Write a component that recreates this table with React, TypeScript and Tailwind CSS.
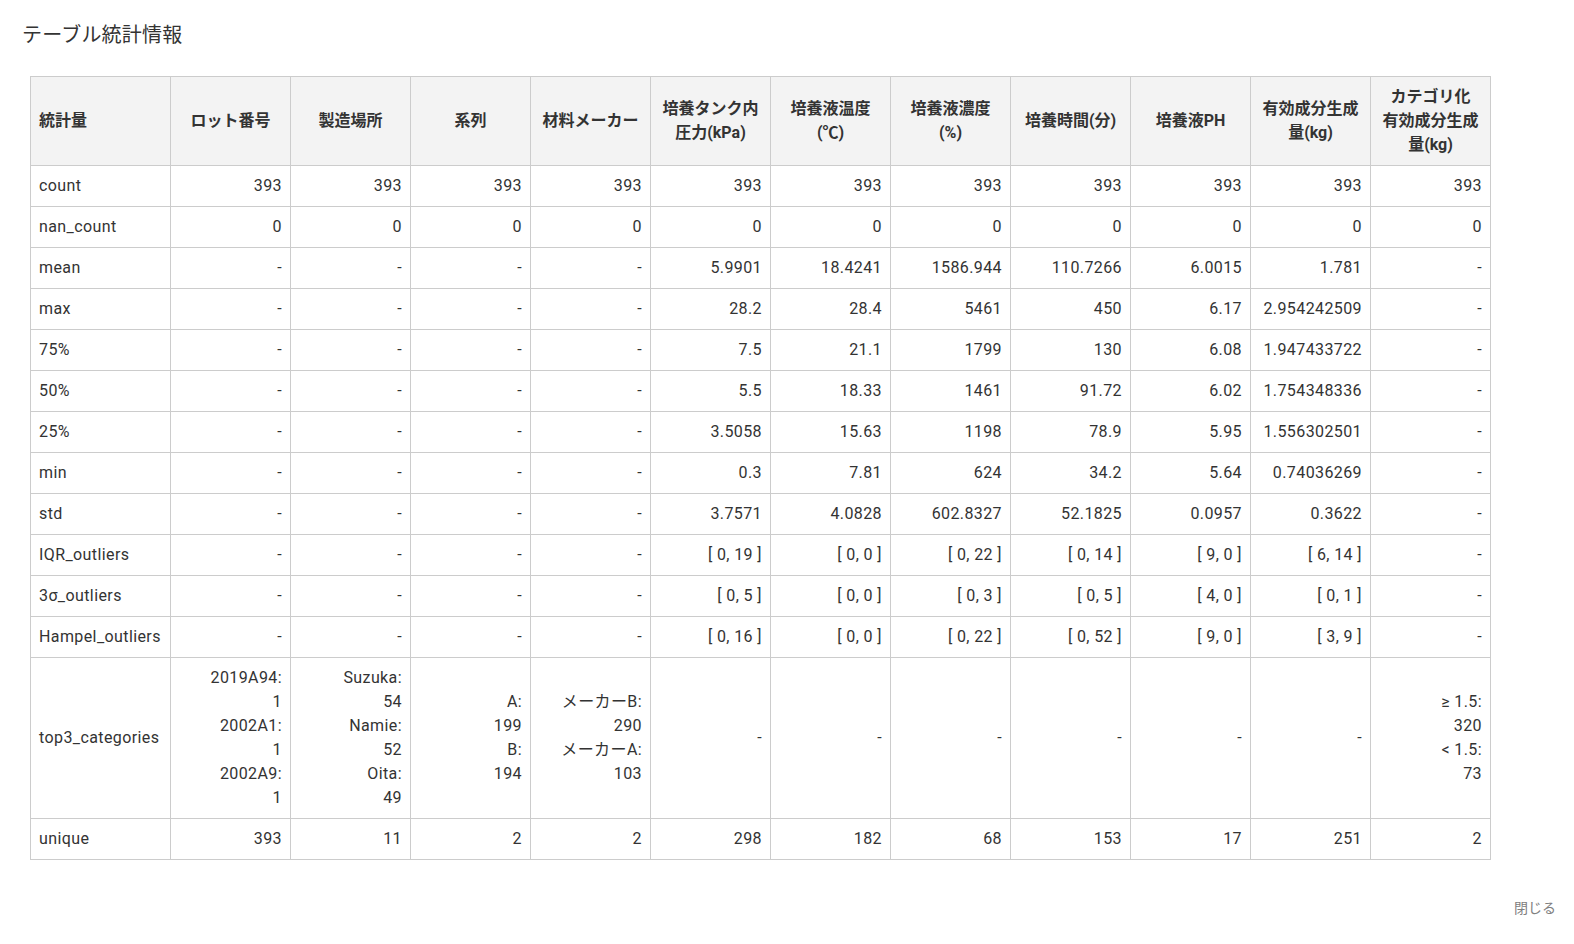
import React from "react";

type Row = {
  label: string;
  values: (string | string[])[];
};

const headers: string[][] = [
  ["ロット番号"],
  ["製造場所"],
  ["系列"],
  ["材料メーカー"],
  ["培養タンク内", "圧力(kPa)"],
  ["培養液温度", "(℃)"],
  ["培養液濃度", "(%)"],
  ["培養時間(分)"],
  ["培養液PH"],
  ["有効成分生成", "量(kg)"],
  ["カテゴリ化", "有効成分生成", "量(kg)"],
];

const d = "-";

const rows: Row[] = [
  { label: "count", values: Array(11).fill("393") },
  { label: "nan_count", values: Array(11).fill("0") },
  {
    label: "mean",
    values: [d, d, d, d, "5.9901", "18.4241", "1586.944", "110.7266", "6.0015", "1.781", d],
  },
  {
    label: "max",
    values: [d, d, d, d, "28.2", "28.4", "5461", "450", "6.17", "2.954242509", d],
  },
  {
    label: "75%",
    values: [d, d, d, d, "7.5", "21.1", "1799", "130", "6.08", "1.947433722", d],
  },
  {
    label: "50%",
    values: [d, d, d, d, "5.5", "18.33", "1461", "91.72", "6.02", "1.754348336", d],
  },
  {
    label: "25%",
    values: [d, d, d, d, "3.5058", "15.63", "1198", "78.9", "5.95", "1.556302501", d],
  },
  {
    label: "min",
    values: [d, d, d, d, "0.3", "7.81", "624", "34.2", "5.64", "0.74036269", d],
  },
  {
    label: "std",
    values: [d, d, d, d, "3.7571", "4.0828", "602.8327", "52.1825", "0.0957", "0.3622", d],
  },
  {
    label: "IQR_outliers",
    values: [d, d, d, d, "[ 0, 19 ]", "[ 0, 0 ]", "[ 0, 22 ]", "[ 0, 14 ]", "[ 9, 0 ]", "[ 6, 14 ]", d],
  },
  {
    label: "3σ_outliers",
    values: [d, d, d, d, "[ 0, 5 ]", "[ 0, 0 ]", "[ 0, 3 ]", "[ 0, 5 ]", "[ 4, 0 ]", "[ 0, 1 ]", d],
  },
  {
    label: "Hampel_outliers",
    values: [d, d, d, d, "[ 0, 16 ]", "[ 0, 0 ]", "[ 0, 22 ]", "[ 0, 52 ]", "[ 9, 0 ]", "[ 3, 9 ]", d],
  },
  {
    label: "top3_categories",
    values: [
      ["2019A94:", "1", "2002A1:", "1", "2002A9:", "1"],
      ["Suzuka:", "54", "Namie:", "52", "Oita:", "49"],
      ["A:", "199", "B:", "194"],
      ["メーカーB:", "290", "メーカーA:", "103"],
      d,
      d,
      d,
      d,
      d,
      d,
      ["≥ 1.5:", "320", "< 1.5:", "73"],
    ],
  },
  {
    label: "unique",
    values: ["393", "11", "2", "2", "298", "182", "68", "153", "17", "251", "2"],
  },
];

const cell = "border border-[#cccccc] px-2 py-2 leading-6 align-middle";

export default function App() {
  return (
    <div className="min-h-[944px] bg-white font-['Roboto','Noto_Sans_CJK_JP',sans-serif] text-[#333333]">
      <h2 className="px-[22px] pt-[19px] text-[20px] leading-8 font-normal tracking-[0.2px] text-[#333333]">
        テーブル統計情報
      </h2>

      <div className="mt-[25px] px-[30px]">
        <table className="table-fixed border-collapse text-[16px]">
          <colgroup>
            <col className="w-[140px]" />
            {headers.map((_, i) => (
              <col key={i} className="w-[120px]" />
            ))}
          </colgroup>
          <thead>
            <tr className="h-[89px] bg-[#f3f3f3]">
              <th className={`${cell} text-left font-bold`}>統計量</th>
              {headers.map((lines, i) => (
                <th key={i} className={`${cell} text-center font-bold`}>
                  {lines.map((l) => (
                    <div key={l}>{l}</div>
                  ))}
                </th>
              ))}
            </tr>
          </thead>
          <tbody className="tracking-[0.4px]">
            {rows.map((row) => (
              <tr key={row.label}>
                <td className={`${cell} text-left`}>{row.label}</td>
                {row.values.map((v, i) => (
                  <td key={i} className={`${cell} text-right`}>
                    {Array.isArray(v)
                      ? v.map((l, j) => <div key={j}>{l}</div>)
                      : v}
                  </td>
                ))}
              </tr>
            ))}
          </tbody>
        </table>
      </div>

      <div className="mt-[32px] flex justify-end pr-[10px]">
        <button
          type="button"
          className="px-2 py-1 text-[14px] leading-6 text-[#808080]"
        >
          閉じる
        </button>
      </div>
    </div>
  );
}
